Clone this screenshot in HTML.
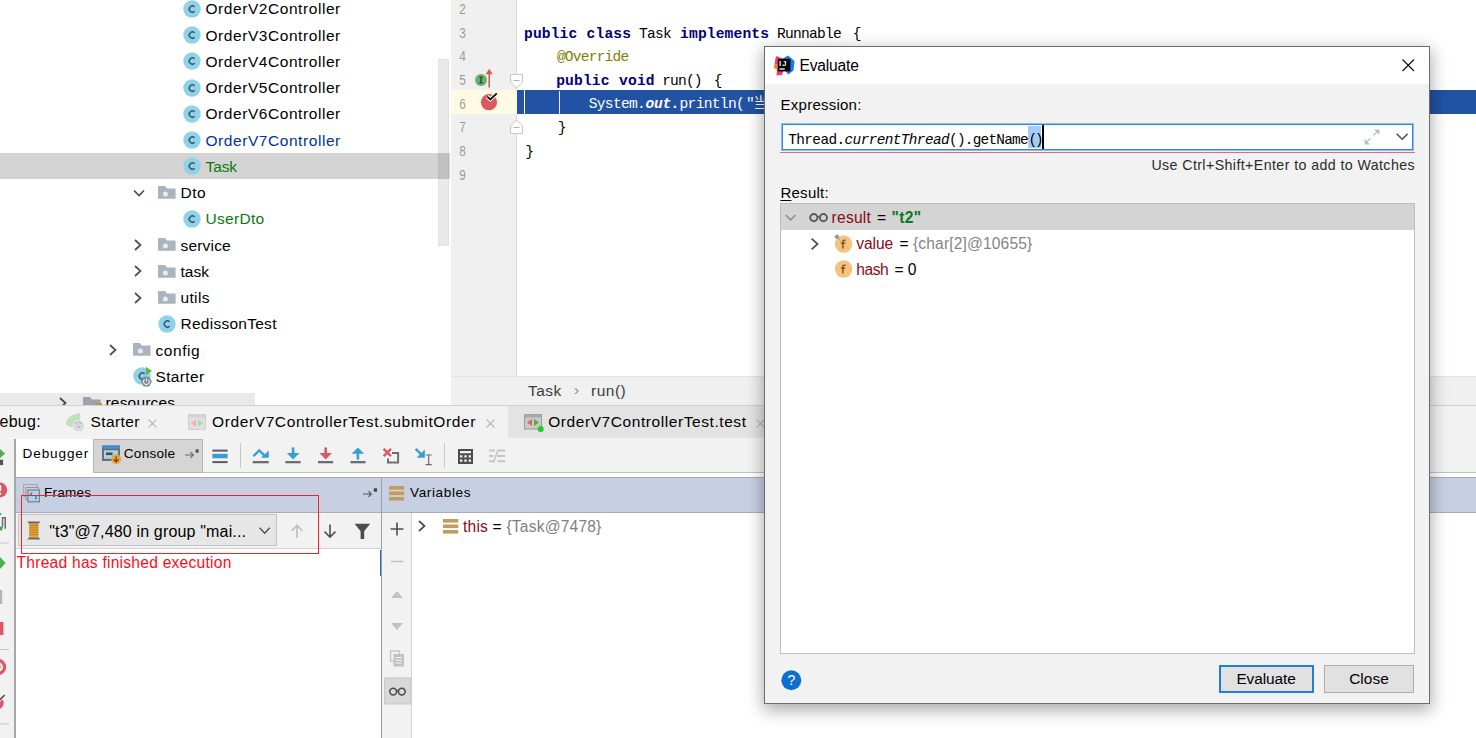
<!DOCTYPE html>
<html lang="en">
<head>
<meta charset="utf-8">
<title>Evaluate</title>
<style>
*{box-sizing:border-box;margin:0;padding:0}
html,body{width:1476px;height:738px;overflow:hidden;background:#fff}
body{position:relative;font-family:"Liberation Sans","Noto Sans CJK SC",sans-serif;font-size:15.5px;letter-spacing:.5px;color:#000}
.abs{position:absolute}
.t{position:absolute;white-space:pre;line-height:20px;height:20px}
svg{position:absolute;overflow:visible}
/* ---------- project tree ---------- */
#tree{position:absolute;left:0;top:0;width:450px;height:405px;background:#fff;overflow:hidden}
.row{position:absolute;left:0;width:450px;height:26.25px}
.row.sel{background:#d4d4d4}
.row .t{top:3px}
.green{color:#0a7a0a}
.blue{color:#0032a0}
/* ---------- editor ---------- */
#gutter{position:absolute;left:451px;top:0;width:66px;height:377px;background:#f0f0f0;border-right:1px solid #d9d9d9}
#editor{position:absolute;left:517px;top:0;width:959px;height:377px;background:#fff}
.code{font-family:"Liberation Mono","Noto Sans CJK SC",monospace;font-size:14.6px;letter-spacing:0;white-space:pre;position:absolute;line-height:20px;height:20px}
.ln{font-family:"Liberation Mono",monospace;font-size:14.6px;letter-spacing:0;position:absolute;left:458.6px;color:#9a9a9a;line-height:20px;transform:scaleX(.8);transform-origin:0 0}
.kw{color:#000080;font-weight:bold}
.an{color:#808000}
</style>
</head>
<body>
<div id="tree">
<svg style="left:183px;top:-0.07px" width="18" height="18" viewBox="0 0 18 18"><circle cx="9" cy="9" r="8.7" fill="#8ed3ea"/><path d="M11.6 6.9 A3.1 3.1 0 1 0 11.6 11.3" fill="none" stroke="#3e5866" stroke-width="1.5"/></svg>
<span class="t" style="left:205.5px;top:-0.57px;font-size:15.5px;letter-spacing:0.560px;">OrderV2Controller</span>
<svg style="left:183px;top:26.17px" width="18" height="18" viewBox="0 0 18 18"><circle cx="9" cy="9" r="8.7" fill="#8ed3ea"/><path d="M11.6 6.9 A3.1 3.1 0 1 0 11.6 11.3" fill="none" stroke="#3e5866" stroke-width="1.5"/></svg>
<span class="t" style="left:205.5px;top:25.67px;font-size:15.5px;letter-spacing:0.560px;">OrderV3Controller</span>
<svg style="left:183px;top:52.42px" width="18" height="18" viewBox="0 0 18 18"><circle cx="9" cy="9" r="8.7" fill="#8ed3ea"/><path d="M11.6 6.9 A3.1 3.1 0 1 0 11.6 11.3" fill="none" stroke="#3e5866" stroke-width="1.5"/></svg>
<span class="t" style="left:205.5px;top:51.92px;font-size:15.5px;letter-spacing:0.560px;">OrderV4Controller</span>
<svg style="left:183px;top:78.67px" width="18" height="18" viewBox="0 0 18 18"><circle cx="9" cy="9" r="8.7" fill="#8ed3ea"/><path d="M11.6 6.9 A3.1 3.1 0 1 0 11.6 11.3" fill="none" stroke="#3e5866" stroke-width="1.5"/></svg>
<span class="t" style="left:205.5px;top:78.17px;font-size:15.5px;letter-spacing:0.560px;">OrderV5Controller</span>
<svg style="left:183px;top:104.92px" width="18" height="18" viewBox="0 0 18 18"><circle cx="9" cy="9" r="8.7" fill="#8ed3ea"/><path d="M11.6 6.9 A3.1 3.1 0 1 0 11.6 11.3" fill="none" stroke="#3e5866" stroke-width="1.5"/></svg>
<span class="t" style="left:205.5px;top:104.42px;font-size:15.5px;letter-spacing:0.560px;">OrderV6Controller</span>
<svg style="left:183px;top:131.18px" width="18" height="18" viewBox="0 0 18 18"><circle cx="9" cy="9" r="8.7" fill="#8ed3ea"/><path d="M11.6 6.9 A3.1 3.1 0 1 0 11.6 11.3" fill="none" stroke="#3e5866" stroke-width="1.5"/></svg>
<span class="t" style="left:205.5px;top:130.68px;font-size:15.5px;letter-spacing:0.560px;color:#0032a0;">OrderV7Controller</span>
<div class="row sel" style="top:153.30px;height:25.6px"></div>
<svg style="left:183px;top:157.43px" width="18" height="18" viewBox="0 0 18 18"><circle cx="9" cy="9" r="8.7" fill="#8ed3ea"/><path d="M11.6 6.9 A3.1 3.1 0 1 0 11.6 11.3" fill="none" stroke="#3e5866" stroke-width="1.5"/></svg>
<span class="t" style="left:205.5px;top:156.93px;font-size:15.5px;letter-spacing:-0.119px;color:#0a7a0a;">Task</span>
<svg style="left:158px;top:185.88px" width="18" height="14" viewBox="0 0 18 14"><path d="M0 0 H7 L9 2.4 H17.6 V12.8 H0 Z" fill="#aab4bf"/><circle cx="7.4" cy="8" r="2.5" fill="#e8ecef"/></svg>
<svg style="left:132px;top:187.68px" width="14" height="10" viewBox="0 0 14 10"><path d="M2 2.5 L7 7.5 L12 2.5" fill="none" stroke="#4d4d4d" stroke-width="1.7"/></svg>
<span class="t" style="left:180.5px;top:183.18px;font-size:15.5px;letter-spacing:0.525px;">Dto</span>
<svg style="left:183px;top:209.93px" width="18" height="18" viewBox="0 0 18 18"><circle cx="9" cy="9" r="8.7" fill="#8ed3ea"/><path d="M11.6 6.9 A3.1 3.1 0 1 0 11.6 11.3" fill="none" stroke="#3e5866" stroke-width="1.5"/></svg>
<span class="t" style="left:205.5px;top:209.43px;font-size:15.5px;letter-spacing:0.292px;color:#0a7a0a;">UserDto</span>
<svg style="left:158px;top:238.38px" width="18" height="14" viewBox="0 0 18 14"><path d="M0 0 H7 L9 2.4 H17.6 V12.8 H0 Z" fill="#aab4bf"/><circle cx="7.4" cy="8" r="2.5" fill="#e8ecef"/></svg>
<svg style="left:133px;top:238.18px" width="10" height="14" viewBox="0 0 10 14"><path d="M2 2 L7.5 7 L2 12" fill="none" stroke="#4d4d4d" stroke-width="1.7"/></svg>
<span class="t" style="left:180.5px;top:235.68px;font-size:15.5px;letter-spacing:0.184px;">service</span>
<svg style="left:158px;top:264.62px" width="18" height="14" viewBox="0 0 18 14"><path d="M0 0 H7 L9 2.4 H17.6 V12.8 H0 Z" fill="#aab4bf"/><circle cx="7.4" cy="8" r="2.5" fill="#e8ecef"/></svg>
<svg style="left:133px;top:264.43px" width="10" height="14" viewBox="0 0 10 14"><path d="M2 2 L7.5 7 L2 12" fill="none" stroke="#4d4d4d" stroke-width="1.7"/></svg>
<span class="t" style="left:180.5px;top:261.93px;font-size:15.5px;letter-spacing:0.041px;">task</span>
<svg style="left:158px;top:290.88px" width="18" height="14" viewBox="0 0 18 14"><path d="M0 0 H7 L9 2.4 H17.6 V12.8 H0 Z" fill="#aab4bf"/><circle cx="7.4" cy="8" r="2.5" fill="#e8ecef"/></svg>
<svg style="left:133px;top:290.68px" width="10" height="14" viewBox="0 0 10 14"><path d="M2 2 L7.5 7 L2 12" fill="none" stroke="#4d4d4d" stroke-width="1.7"/></svg>
<span class="t" style="left:180.5px;top:288.18px;font-size:15.5px;letter-spacing:0.344px;">utils</span>
<svg style="left:158px;top:314.93px" width="18" height="18" viewBox="0 0 18 18"><circle cx="9" cy="9" r="8.7" fill="#8ed3ea"/><path d="M11.6 6.9 A3.1 3.1 0 1 0 11.6 11.3" fill="none" stroke="#3e5866" stroke-width="1.5"/></svg>
<span class="t" style="left:180.5px;top:314.43px;font-size:15.5px;letter-spacing:0.263px;">RedissonTest</span>
<svg style="left:133px;top:343.38px" width="18" height="14" viewBox="0 0 18 14"><path d="M0 0 H7 L9 2.4 H17.6 V12.8 H0 Z" fill="#aab4bf"/><circle cx="7.4" cy="8" r="2.5" fill="#e8ecef"/></svg>
<svg style="left:108px;top:343.18px" width="10" height="14" viewBox="0 0 10 14"><path d="M2 2 L7.5 7 L2 12" fill="none" stroke="#4d4d4d" stroke-width="1.7"/></svg>
<span class="t" style="left:155.5px;top:340.68px;font-size:15.5px;letter-spacing:0.554px;">config</span>
<svg style="left:133px;top:367.43px" width="18" height="18" viewBox="0 0 18 18"><circle cx="9" cy="9" r="8.7" fill="#8ed3ea"/><path d="M11.6 6.9 A3.1 3.1 0 1 0 11.6 11.3" fill="none" stroke="#3e5866" stroke-width="1.5"/></svg>
<svg style="left:141px;top:366.43px" width="12" height="22" viewBox="0 0 12 22"><path d="M4.9 0.7 L11 4.9 L4.9 9 Z" fill="#62b543"/><path d="M10.9 15.6 L8.15 20.4 H2.65 L-0.1 15.6 L2.65 10.8 H8.15 Z" fill="#7b8d9b"/><path d="M5.4 12.4 V15.6 M3.4 13.6 A2.9 2.9 0 1 0 7.4 13.6" fill="none" stroke="#eef1f3" stroke-width="1.1"/></svg>
<span class="t" style="left:155.5px;top:366.93px;font-size:15.5px;letter-spacing:0.355px;">Starter</span>
<svg style="left:83px;top:397.38px" width="18" height="14" viewBox="0 0 18 14"><path d="M0 0 H7 L9 2.4 H17.6 V12.8 H0 Z" fill="#aab4bf"/></svg>
<svg style="left:58px;top:395.68px" width="10" height="14" viewBox="0 0 10 14"><path d="M2 2 L7.5 7 L2 12" fill="none" stroke="#4d4d4d" stroke-width="1.7"/></svg>
<span class="t" style="left:105.5px;top:393.18px;font-size:15.5px;letter-spacing:0.182px;">resources</span>
<div class="abs" style="left:94.6px;top:403.3px;width:7.2px;height:1.4px;background:#e0a030"></div>
<div class="abs" style="left:0;top:393px;width:255px;height:12px;background:rgba(0,0,0,.085)"></div>
<div class="abs" style="left:438px;top:59.3px;width:11px;height:187px;background:rgba(0,0,0,.085);border:1px solid rgba(0,0,0,.03)"></div>
</div>
<div class="abs" style="left:0;top:405px;width:1476px;height:1px;background:#d1d1d1"></div>
<div id="gutter"></div><div id="editor"></div>
<div class="abs" style="left:451px;top:90.10px;width:66px;height:23.8px;background:#fffae3"></div>
<div class="abs" style="left:517px;top:90.10px;width:959px;height:23.8px;background:#2152a3"></div>
<div class="abs" style="left:524px;top:90.10px;width:1px;height:23.8px;background:#fff"></div>
<div class="abs" style="left:559px;top:91.10px;width:1px;height:22.8px;background:#e8eefc"></div>
<span class="ln" style="top:0.10px">2</span>
<span class="ln" style="top:23.75px">3</span>
<span class="ln" style="top:47.40px">4</span>
<span class="ln" style="top:71.05px">5</span>
<span class="ln" style="top:94.70px">6</span>
<span class="ln" style="top:118.35px">7</span>
<span class="ln" style="top:142.00px">8</span>
<span class="ln" style="top:165.65px">9</span>
<span class="code kw" style="left:524.00px;top:23.50px;letter-spacing:0.140px;">public</span>
<span class="code kw" style="left:586.60px;top:23.50px;letter-spacing:0.140px;">class</span>
<span class="code" style="left:639.10px;top:23.50px;letter-spacing:-0.760px;">Task</span>
<span class="code kw" style="left:680.10px;top:23.50px;letter-spacing:0.140px;">implements</span>
<span class="code" style="left:777.10px;top:23.50px;letter-spacing:-0.760px;">Runnable</span>
<span class="code" style="left:852.80px;top:23.50px;letter-spacing:-0.760px;">{</span>
<span class="code an" style="left:556.90px;top:47.15px;letter-spacing:-0.810px;">@Override</span>
<span class="code kw" style="left:556.20px;top:70.80px;letter-spacing:0.140px;">public</span>
<span class="code kw" style="left:619.10px;top:70.80px;letter-spacing:0.140px;">void</span>
<span class="code" style="left:662.20px;top:70.80px;letter-spacing:-0.860px;">run()</span>
<span class="code" style="left:713.80px;top:70.80px;letter-spacing:-0.760px;">{</span>
<span class="code" style="left:588.70px;top:94.45px;letter-spacing:-0.690px;color:#fff;">System.</span>
<span class="code" style="left:645.60px;top:94.45px;letter-spacing:-0.260px;color:#fff;font-weight:bold;font-style:italic;">out.</span>
<span class="code" style="left:679.50px;top:94.45px;letter-spacing:-0.690px;color:#fff;">println(</span>
<span class="code" style="left:745.90px;top:94.45px;letter-spacing:-0.760px;color:#fff;">"</span>
<span class="code" style="left:753.40px;top:94.45px;letter-spacing:5.840px;color:#fff;">当前</span>
<span class="code" style="left:557.70px;top:118.10px;letter-spacing:-0.760px;">}</span>
<span class="code" style="left:525.20px;top:141.75px;letter-spacing:-0.760px;">}</span>
<svg style="left:474px;top:65.35px" width="22" height="24" viewBox="0 0 22 24"><circle cx="7" cy="15" r="6" fill="#62b36c"/><path d="M5.3 12.2 H8.7 M7 12.2 V17.8 M5.3 17.8 H8.7" stroke="#3a4a3d" stroke-width="1.5" fill="none"/><path d="M15.2 22.6 V5" stroke="#e0594d" stroke-width="1.6" fill="none"/><path d="M11.6 9.2 L15.2 3.8 L18.8 9.2 Z" fill="#e0594d"/></svg>
<svg style="left:479px;top:90.00px" width="22" height="24" viewBox="0 0 22 24"><circle cx="10" cy="12.2" r="8.1" fill="#db5860"/><path d="M8.2 6.6 L11.4 9.4 L17.8 3.4" stroke="#fff" stroke-width="4" fill="none"/><path d="M8.2 6.6 L11.4 9.4 L17.8 3.4" stroke="#111" stroke-width="1.9" fill="none"/></svg>
<svg style="left:510px;top:73.95px" width="13" height="15" viewBox="0 0 13 15"><path d="M0.5 0.5 H12.5 V8 L6.5 14 L0.5 8 Z" fill="#fff" stroke="#c6c6c6"/><path d="M3.5 6.5 H9.5" stroke="#b0b0b0"/></svg>
<svg style="left:510px;top:118.75px" width="13" height="15" viewBox="0 0 13 15"><path d="M0.5 14.5 H12.5 V7 L6.5 1 L0.5 7 Z" fill="#fff" stroke="#c6c6c6"/><path d="M3.5 8.5 H9.5" stroke="#b0b0b0"/></svg>
<div class="abs" style="left:451px;top:376px;width:1025px;height:29px;background:#f0f0f0;border-top:1px solid #e3e3e3"></div>
<span class="t" style="left:528px;top:381px;color:#3c3c3c">Task</span>
<span class="t" style="left:574px;top:380px;color:#8a8a8a;font-size:15px">›</span>
<span class="t" style="left:591px;top:381px;color:#3c3c3c">run()</span>
<div class="abs" style="left:0;top:406px;width:1476px;height:332px;background:#fff"></div>
<div class="abs" style="left:0;top:406px;width:1476px;height:33px;background:#f2f2f2"></div>
<div class="abs" style="left:508px;top:406px;width:270px;height:32px;background:#e3e3e3"></div>
<span class="t" style="left:-12.2px;top:412.00px;font-size:16px;letter-spacing:0.234px;">Debug:</span>
<svg style="left:65px;top:412px" width="21" height="21" viewBox="0 0 21 21"><path d="M1 12 C1 5 7 3 15 1 C16 6 15 11 11 14 C7 16 3 15 1 12 Z" fill="#bfe0b8"/><circle cx="13.5" cy="14" r="5.6" fill="#c3c7ca" stroke="#f2f2f2" stroke-width="1"/><path d="M13.5 10.6 V14 M11.2 12 A3.2 3.2 0 1 0 15.8 12" fill="none" stroke="#eeeeee" stroke-width="1.2"/></svg>
<span class="t" style="left:90.6px;top:412.00px;font-size:15.5px;letter-spacing:0.398px;">Starter</span>
<svg style="left:148.2px;top:419px" width="9" height="9" viewBox="0 0 10 10"><path d="M0.7 0.7 L9.3 9.3 M9.3 0.7 L0.7 9.3" stroke="#b3b3b3" stroke-width="1.3" fill="none"/></svg>
<svg style="left:188px;top:414px" width="18" height="16" viewBox="0 0 18 16"><rect x="0.5" y="0.5" width="17" height="15" fill="#e0e0e0" stroke="#cfcfcf"/><rect x="0.5" y="0.5" width="17" height="3" fill="#d2d2d2"/><path d="M8 5.5 V12.5 L3 9 Z" fill="#f0b0ac"/><path d="M10 5.5 V12.5 L15 9 Z" fill="#a8dca8"/></svg>
<span class="t" style="left:212px;top:412.00px;font-size:15.5px;letter-spacing:0.613px;">OrderV7ControllerTest.submitOrder</span>
<svg style="left:485.6px;top:419px" width="9" height="9" viewBox="0 0 10 10"><path d="M0.7 0.7 L9.3 9.3 M9.3 0.7 L0.7 9.3" stroke="#b3b3b3" stroke-width="1.3" fill="none"/></svg>
<svg style="left:524px;top:414px" width="21" height="19" viewBox="0 0 21 19"><rect x="0.5" y="0.5" width="17" height="14.5" fill="#c9c9c9" stroke="#9a9a9a"/><rect x="0.5" y="0.5" width="17" height="3" fill="#a9a9a9"/><path d="M8 5 V12 L3 8.5 Z" fill="#e0635c"/><path d="M10 5 V12 L15 8.5 Z" fill="#4caf50"/><circle cx="16.7" cy="15" r="3" fill="#1fd11f"/></svg>
<span class="t" style="left:548.2px;top:412.00px;font-size:15.5px;letter-spacing:0.573px;">OrderV7ControllerTest.test</span>
<svg style="left:756.3px;top:419px" width="9" height="9" viewBox="0 0 10 10"><path d="M0.7 0.7 L9.3 9.3 M9.3 0.7 L0.7 9.3" stroke="#b3b3b3" stroke-width="1.3" fill="none"/></svg>
<div class="abs" style="left:0;top:439px;width:1476px;height:34px;background:#f2f2f2"></div>
<div class="abs" style="left:0;top:472px;width:1476px;height:1px;background:#c2c2c2"></div>
<div class="abs" style="left:16px;top:473px;width:1460px;height:4px;background:#fff"></div>
<div class="abs" style="left:0;top:439px;width:16px;height:299px;background:#f2f2f2"></div>
<div class="abs" style="left:14.2px;top:439px;width:1.5px;height:299px;background:#a8a8a8"></div>
<div class="abs" style="left:16px;top:439px;width:78px;height:38px;background:#fff"></div>
<span class="t" style="left:22.6px;top:444.10px;font-size:13.6px;letter-spacing:0.860px;">Debugger</span>
<div class="abs" style="left:93px;top:439px;width:110px;height:33.5px;background:#d5d5d5;border:1px solid #b4b4b4"></div>
<svg style="left:102px;top:444.6px" width="20" height="20" viewBox="0 0 20 20"><rect x="0" y="0.5" width="18" height="15.5" fill="#6e6e6e"/><rect x="0" y="0.5" width="18" height="3.2" fill="#3d8fd6"/><rect x="2" y="5.3" width="14" height="8.5" fill="#a9d3f0"/><rect x="4" y="7.5" width="6.5" height="2.6" fill="#4a4a4a"/><circle cx="14.2" cy="14.2" r="5" fill="#eaa43a"/><path d="M14.2 11.2 V16.6 M11.8 14.4 L14.2 16.9 L16.6 14.4" fill="none" stroke="#5a4420" stroke-width="1.2"/></svg>
<span class="t" style="left:123.8px;top:444.10px;font-size:13.6px;letter-spacing:0.246px;">Console</span>
<svg style="left:185px;top:448px" width="14" height="12" viewBox="0 0 14 12"><path d="M0 7 H8 M5.5 4.2 L8.3 7 L5.5 9.8" fill="none" stroke="#666" stroke-width="1.1"/><rect x="10.6" y="1.3" width="3" height="3.4" fill="#555"/></svg>
<svg style="left:212px;top:449px" width="16" height="15" viewBox="0 0 16 15"><rect x="0.4" y="0.6" width="15.2" height="2" fill="#5a5a5a"/><rect x="0.4" y="4.8" width="15.2" height="4.5" fill="#389fd6"/><rect x="0.4" y="12.1" width="15.2" height="2" fill="#5a5a5a"/></svg>
<div class="abs" style="left:240px;top:443px;width:1px;height:25px;background:#c8c8c8"></div>
<svg style="left:245px;top:440px" width="200" height="32" viewBox="0 0 200 32"><path d="M8.4 16.2 L14.2 10.4 L20.6 16.6" fill="none" stroke="#389fd6" stroke-width="2.4"/><path d="M15.8 17.8 H23.8 V10.6 Z" fill="#389fd6"/><rect x="7.7" y="21" width="16" height="2.3" fill="#6e6e6e"/><path d="M48.1 7.4 V15" stroke="#389fd6" stroke-width="2.6" fill="none"/><path d="M41.8 12.9 H54.4 L48.1 19.4 Z" fill="#389fd6"/><rect x="40.4" y="21" width="15.2" height="2.3" fill="#6e6e6e"/><path d="M80.7 7.4 V15" stroke="#db5860" stroke-width="2.6" fill="none"/><path d="M74.4 12.9 H87 L80.7 19.4 Z" fill="#db5860"/><rect x="73" y="21" width="15.2" height="2.3" fill="#6e6e6e"/><path d="M112.9 19.6 V12" stroke="#389fd6" stroke-width="2.6" fill="none"/><path d="M106.6 13.8 H119.2 L112.9 7.4 Z" fill="#389fd6"/><rect x="105.4" y="21" width="15.2" height="2.3" fill="#6e6e6e"/><path d="M138.6 8.8 L146 16.2 M146 8.8 L138.6 16.2" stroke="#db5860" stroke-width="2.4" fill="none"/><path d="M147 12.9 H153.1 V22.4 H143 V18.6" fill="none" stroke="#6e6e6e" stroke-width="2"/><path d="M170.6 8.8 L177.5 15.6" stroke="#389fd6" stroke-width="2.4" fill="none"/><path d="M171.6 17.8 H179.8 V9.6 Z" fill="#389fd6"/><path d="M180.6 15 H186.8 M183.7 15 V24.6 M180.6 24.6 H186.8" stroke="#6e6e6e" stroke-width="1.2" fill="none"/></svg>
<div class="abs" style="left:443.5px;top:443px;width:1px;height:25px;background:#c8c8c8"></div>
<svg style="left:457.5px;top:448.5px" width="15" height="15" viewBox="0 0 15 15"><path d="M0 0 H15 V15 H0 Z M2 2 V4.2 H13 V2 Z M2 6.2 V8.4 H4.4 V6.2 Z M6.3 6.2 V8.4 H8.7 V6.2 Z M10.6 6.2 V8.4 H13 V6.2 Z M2 10.4 V12.8 H4.4 V10.4 Z M6.3 10.4 V12.8 H8.7 V10.4 Z M10.6 10.4 V12.8 H13 V10.4 Z" fill="#4d4d4d" fill-rule="evenodd"/></svg>
<svg style="left:489px;top:449px" width="16" height="14" viewBox="0 0 16 14"><path d="M0 1.6 H6 M0 6.9 H4.4 M0 12.2 H5 M9.4 1.6 H16 M8 6.9 H16 M8.6 12.2 H16" stroke="#c4c4c4" stroke-width="2" fill="none"/><path d="M9 0.6 L4.6 13.2" stroke="#c4c4c4" stroke-width="1.4" fill="none"/></svg>
<svg style="left:0;top:446px" width="14" height="292" viewBox="0 0 14 292"><path d="M0 3 L5.2 7.5 L0 12 Z" fill="#4caf50"/><rect x="0" y="13.7" width="3.1" height="5.4" fill="#555"/><circle cx="-0.2" cy="44" r="7.4" fill="#e05560"/><rect x="-1" y="39" width="2.2" height="6" fill="#fff"/><rect x="-1" y="46.6" width="2.2" height="2.2" fill="#fff"/><path d="M1.8 70.9 H6 V82.8 H4.5 V72.4 H3.3 V80.6 H1.8 Z" fill="#6e6e6e"/><path d="M0 80.6 H3.4 L1.3 85.2 L0 84 Z" fill="#3fae4a"/><rect x="0" y="67" width="1.2" height="2.2" fill="#3fae4a"/><rect x="0" y="96.5" width="9" height="1" fill="#c8c8c8"/><path d="M0 111 L5.6 117 L0 123 Z" fill="#4caf50"/><rect x="0" y="144" width="2.2" height="14" fill="#b5b5b5"/><rect x="0" y="176" width="3.4" height="13" fill="#e05560"/><rect x="0" y="203" width="9" height="1" fill="#c8c8c8"/><circle cx="-2" cy="221" r="6.6" fill="none" stroke="#e05560" stroke-width="3.2"/><circle cx="-2" cy="221" r="2.6" fill="#e05560"/><circle cx="-2.5" cy="257" r="6.2" fill="#e05560"/><path d="M-1 254.6 L4.8 249" stroke="#f2f2f2" stroke-width="3.4"/><path d="M-1 254.6 L4.8 249" stroke="#4d4d4d" stroke-width="1.5"/><rect x="0" y="277.4" width="9" height="1" fill="#c8c8c8"/></svg>
<div class="abs" style="left:16px;top:477px;width:1460px;height:35.5px;background:#c7d0e2;border-top:1px solid #a7a9ad;border-bottom:1px solid #a9acb2"></div>
<div class="abs" style="left:381px;top:477px;width:1.4px;height:261px;background:#9d9fa3"></div>
<svg style="left:22.9px;top:483.6px" width="17" height="19" viewBox="0 0 17 19"><rect x="0.6" y="0.6" width="13.6" height="12" fill="none" stroke="#a2a6ad" stroke-width="1"/><rect x="2.8" y="3.5" width="12.6" height="11.8" fill="#c7d0e2" stroke="#90949b" stroke-width="1"/><rect x="5" y="6" width="11.4" height="11.8" fill="#a9d5f1" stroke="#7c8086" stroke-width="1.2"/><path d="M9.4 8.4 L7.4 10 L9.4 11.6 M12 12 L14 13.6 L12 15.2" fill="none" stroke="#3e4a58" stroke-width="1"/></svg>
<span class="t" style="left:44px;top:483.00px;font-size:13.6px;letter-spacing:0.187px;">Frames</span>
<svg style="left:363px;top:487px" width="15" height="12" viewBox="0 0 15 12"><path d="M0 7 H8 M5.5 4.2 L8.3 7 L5.5 9.8" fill="none" stroke="#555" stroke-width="1.1"/><rect x="10.8" y="1.3" width="3.2" height="3.4" fill="#444"/></svg>
<svg style="left:389.4px;top:486px" width="16" height="15" viewBox="0 0 16 15"><rect width="15.2" height="3.6" fill="#c39b5f"/><rect y="5.5" width="15.2" height="3.6" fill="#c39b5f"/><rect y="11" width="15.2" height="3.6" fill="#c39b5f"/></svg>
<span class="t" style="left:410px;top:483.00px;font-size:13.6px;letter-spacing:0.603px;">Variables</span>
<div class="abs" style="left:16px;top:512.5px;width:365px;height:36.5px;background:#f2f2f2;border-bottom:1px solid #d4d4d4"></div>
<div class="abs" style="left:17.8px;top:514px;width:259.2px;height:32.4px;background:#e6e6e6;border:1px solid #c4c4c4"></div>
<svg style="left:26.5px;top:521px" width="14" height="19" viewBox="0 0 14 19"><rect x="2.2" y="2" width="9.2" height="15" fill="#e9aa3d"/><path d="M2.2 4.5 H11.4 M2.2 6.8 H11.4 M2.2 9.1 H11.4 M2.2 11.4 H11.4 M2.2 13.7 H11.4" stroke="#b9791c" stroke-width="1"/><path d="M0.3 0.4 H13.3 L11.8 2.6 H1.8 Z M1.8 16.4 H11.8 L13.3 18.6 H0.3 Z" fill="#6b6b6b"/></svg>
<span class="t" style="left:49.2px;top:522.40px;font-size:16px;letter-spacing:0.167px;">&quot;t3&quot;@7,480 in group &quot;mai...</span>
<svg style="left:259px;top:527px" width="12" height="8" viewBox="0 0 12 8"><path d="M0.6 0.8 L5.7 6.3 L10.8 0.8" fill="none" stroke="#4d4d4d" stroke-width="1.4"/></svg>
<svg style="left:289.5px;top:524px" width="14" height="15" viewBox="0 0 14 15"><path d="M7 14 V1.6 M1.6 7 L7 1.4 L12.4 7" fill="none" stroke="#bdbdbd" stroke-width="1.6"/></svg>
<svg style="left:322.8px;top:524px" width="14" height="15" viewBox="0 0 14 15"><path d="M7 0.6 V13 M1.6 7.6 L7 13.2 L12.4 7.6" fill="none" stroke="#4d4d4d" stroke-width="1.6"/></svg>
<svg style="left:354px;top:522.5px" width="17" height="17" viewBox="0 0 17 17"><path d="M0.6 0.8 H16.2 L10.2 8.2 V16 H6.6 V8.2 Z" fill="#4d4d4d"/></svg>
<span class="t" style="left:16.6px;top:552.80px;font-size:15.6px;letter-spacing:0.239px;color:#fb0d1b;">Thread has finished execution</span>
<div class="abs" style="left:379.6px;top:549.5px;width:1.6px;height:26px;background:#2b66b3"></div>
<div class="abs" style="left:382.4px;top:513px;width:30px;height:225px;background:#f2f2f2;border-right:1px solid #d4d4d4"></div>
<svg style="left:382px;top:513px" width="30" height="200" viewBox="0 0 30 200"><path d="M8.6 16 H21.4 M15 9.6 V22.4" stroke="#4d4d4d" stroke-width="1.6"/><path d="M9 48.5 H21" stroke="#c2c2c2" stroke-width="1.6"/><path d="M9 85 H21 L15 78 Z" fill="#c2c2c2"/><path d="M9 110 H21 L15 117 Z" fill="#c2c2c2"/><rect x="8.5" y="138" width="9" height="10" fill="none" stroke="#c2c2c2" stroke-width="1.3"/><rect x="11.5" y="141" width="10.5" height="12.5" fill="#c2c2c2"/><path d="M13.5 144.5 H20 M13.5 147.3 H20 M13.5 150.1 H20" stroke="#f2f2f2" stroke-width="1"/><rect x="2.6" y="165" width="26" height="26" fill="#d9d9d9" stroke="#c6c6c6"/><circle cx="11.2" cy="178.6" r="3.4" fill="none" stroke="#4d4d4d" stroke-width="1.6"/><circle cx="19.8" cy="178.6" r="3.4" fill="none" stroke="#4d4d4d" stroke-width="1.6"/><path d="M14.4 177.6 H16.6" stroke="#4d4d4d" stroke-width="1.4"/></svg>
<svg style="left:417px;top:519px" width="10" height="14" viewBox="0 0 10 14"><path d="M2 2 L7.5 7 L2 12" fill="none" stroke="#4d4d4d" stroke-width="1.7"/></svg>
<svg style="left:443.4px;top:519px" width="16" height="15" viewBox="0 0 16 15"><rect width="15.2" height="3.6" fill="#c39b5f"/><rect y="5.5" width="15.2" height="3.6" fill="#c39b5f"/><rect y="11" width="15.2" height="3.6" fill="#c39b5f"/></svg>
<span class="t" style="left:463px;top:516.90px;font-size:15.6px;letter-spacing:0.192px;"><span style="color:#8b0a14">this</span> = <span style="color:#808080">{Task@7478}</span></span>
<div class="abs" style="left:20.8px;top:495px;width:298.4px;height:58.6px;border:1.2px solid #f5202c"></div>
<div class="abs" style="left:764px;top:46px;width:666px;height:657.5px;background:#f2f2f2;border:1px solid #6c6c6c;box-shadow:0 5px 16px 1px rgba(0,0,0,.34)"></div>
<div class="abs" style="left:765px;top:47px;width:664px;height:37px;background:#fff"></div>
<svg style="left:773.5px;top:54.5px" width="21" height="21" viewBox="0 0 21 21"><path d="M2 1 L9 3.5 L4 10 L0.5 8.5 Z" fill="#fb3a6d"/><path d="M0.5 8.5 L4 10 L3 14.5 L0 13 Z" fill="#fc7a1a"/><path d="M9 3.5 L14 0.5 L20.5 6 L19.5 15.5 L14 19.5 L9 12 Z" fill="#0c7df2"/><path d="M3 14.5 L4 10 L10 14 L8 20 L2.5 20.5 Z" fill="#fb3a6d"/><rect x="3.8" y="3.8" width="12.6" height="12.6" fill="#000"/><rect x="5.4" y="13.4" width="5.4" height="1.3" fill="#fff"/><text x="5.1" y="11" font-family="Liberation Sans,sans-serif" font-size="7.6" font-weight="bold" fill="#fff" letter-spacing="1">IJ</text></svg>
<span class="t" style="left:799.6px;top:55.90px;font-size:15.6px;letter-spacing:-0.211px;">Evaluate</span>
<svg style="left:1402px;top:59px" width="13" height="13" viewBox="0 0 13 13"><path d="M0.5 0.5 L12 12 M12 0.5 L0.5 12" stroke="#111" stroke-width="1.2" fill="none"/></svg>
<span class="t" style="left:780.6px;top:94.60px;font-size:15px;letter-spacing:0.239px;">Expression:</span>
<div class="abs" style="left:780px;top:152px;width:635px;height:1px;background:#e4687c"></div>
<div class="abs" style="left:781.6px;top:123.8px;width:631.2px;height:26px;background:#fff;border:1px solid #2f86e4;box-shadow:0 0 0 1px rgba(60,145,235,.55)"></div>
<div class="abs" style="left:1028px;top:126px;width:13.4px;height:22.4px;background:#a6cbf5"></div>
<div class="abs" style="left:1041.6px;top:125.4px;width:2px;height:23.2px;background:#000"></div>
<span class="t" style="left:788.2px;top:130.20px;font-size:14.4px;letter-spacing:-0.579px;font-family:'Liberation Mono','Noto Sans CJK SC',monospace;">Thread.</span>
<span class="t" style="left:844.6px;top:130.20px;font-size:14.4px;letter-spacing:-0.605px;font-style:italic;font-family:'Liberation Mono','Noto Sans CJK SC',monospace;">currentThread</span>
<span class="t" style="left:949px;top:130.20px;font-size:14.4px;letter-spacing:-0.756px;font-family:'Liberation Mono','Noto Sans CJK SC',monospace;">().getName</span>
<span class="t" style="left:1028.4px;top:130.20px;font-size:14.4px;letter-spacing:-1.941px;font-family:'Liberation Mono','Noto Sans CJK SC',monospace;">()</span>
<svg style="left:1363.6px;top:128.8px" width="16" height="16" viewBox="0 0 16 16"><path d="M9.6 6.2 L14.6 1.2 M2 13.8 L6.6 9.2" stroke="#b9c0c5" stroke-width="1.3" fill="none"/><path d="M10 0.6 H15.4 V6 Z M0.6 9.8 V15.4 H6.2 Z" fill="#b9c0c5"/></svg>
<svg style="left:1395.6px;top:133px" width="13" height="8" viewBox="0 0 13 8"><path d="M0.7 0.8 L6.2 6.3 L11.7 0.8" fill="none" stroke="#4d4d4d" stroke-width="1.5"/></svg>
<span class="t" style="left:1151.4px;top:154.90px;font-size:14.2px;letter-spacing:0.414px;color:#2b2b2b;">Use Ctrl+Shift+Enter to add to Watches</span>
<span class="t" style="left:780.4px;top:182.50px;font-size:15px;letter-spacing:0.273px;"><span style="text-decoration:underline;text-underline-offset:2px">R</span>esult:</span>
<div class="abs" style="left:780.4px;top:202.6px;width:634.6px;height:451.2px;background:#fff;border:1px solid #bdbdbd"></div>
<div class="abs" style="left:781.4px;top:203.6px;width:632.6px;height:26px;background:#d4d4d4"></div>
<svg style="left:785px;top:213.5px" width="12" height="8" viewBox="0 0 12 8"><path d="M0.8 1 L5.6 6 L10.4 1" fill="none" stroke="#8c8c8c" stroke-width="1.5"/></svg>
<svg style="left:809.4px;top:212px" width="20" height="11" viewBox="0 0 20 11"><circle cx="4.8" cy="5.6" r="3.6" fill="none" stroke="#5a5a5a" stroke-width="1.9"/><circle cx="14.4" cy="5.6" r="3.6" fill="none" stroke="#5a5a5a" stroke-width="1.9"/><path d="M8.2 4.6 H11" stroke="#5a5a5a" stroke-width="1.4"/></svg>
<span class="t" style="left:831.6px;top:208.10px;font-size:15.6px;letter-spacing:0.210px;color:#8b0a14;">result</span>
<span class="t" style="left:877px;top:208.10px;font-size:15.6px;letter-spacing:0.000px;">=</span>
<span class="t" style="left:891.6px;top:208.10px;font-size:15.6px;letter-spacing:0.286px;color:#067d17;font-weight:bold;">&quot;t2&quot;</span>
<svg style="left:810px;top:237px" width="10" height="14" viewBox="0 0 10 14"><path d="M1.6 1.6 L7.6 7 L1.6 12.4" fill="none" stroke="#4d4d4d" stroke-width="1.7"/></svg>
<svg style="left:833px;top:233px" width="21" height="21" viewBox="0 0 21 21"><circle cx="10.6" cy="11" r="8.7" fill="#f6c37f"/><path d="M12.6 7.3 C10.6 6.6 9.9 7.6 9.9 9 V15.6 M7.8 10.2 H12.4" fill="none" stroke="#6b4a22" stroke-width="1.3"/><path d="M1.2 3.6 L4.2 1.2 L6.4 3.8 L3.4 6.2 Z" fill="#8b97a0"/><path d="M5 5 L7.6 7.4" stroke="#8b97a0" stroke-width="1"/></svg>
<span class="t" style="left:856.2px;top:234.40px;font-size:15.6px;letter-spacing:-0.056px;color:#8b0a14;">value</span>
<span class="t" style="left:899.4px;top:234.40px;font-size:15.6px;letter-spacing:0.000px;">=</span>
<span class="t" style="left:913px;top:234.40px;font-size:15.6px;letter-spacing:0.141px;color:#858585;">{char[2]@10655}</span>
<svg style="left:833px;top:258.4px" width="21" height="21" viewBox="0 0 21 21"><circle cx="10.6" cy="11" r="8.7" fill="#f6c37f"/><path d="M12.6 7.3 C10.6 6.6 9.9 7.6 9.9 9 V15.6 M7.8 10.2 H12.4" fill="none" stroke="#6b4a22" stroke-width="1.3"/></svg>
<span class="t" style="left:856.2px;top:259.70px;font-size:15.6px;letter-spacing:-0.407px;color:#8b0a14;">hash</span>
<span class="t" style="left:894.4px;top:259.70px;font-size:15.6px;letter-spacing:-0.042px;">= 0</span>
<svg style="left:781.2px;top:670.2px" width="21" height="21" viewBox="0 0 21 21"><circle cx="10.3" cy="10.3" r="10" fill="#0f6fd1"/><text x="10.4" y="15.2" text-anchor="middle" font-family="Liberation Sans,sans-serif" font-size="14" fill="#fff" letter-spacing="0">?</text></svg>
<div class="abs" style="left:1218.6px;top:665.2px;width:95.4px;height:27.6px;background:#e1e1e1;border:2px solid #1f7fdd"></div>
<span class="t" style="left:1236.4px;top:669.10px;font-size:15.4px;letter-spacing:-0.063px;">Evaluate</span>
<div class="abs" style="left:1323.6px;top:665.4px;width:90.6px;height:27.2px;background:#e1e1e1;border:1px solid #adadad"></div>
<span class="t" style="left:1349.2px;top:669.10px;font-size:15.4px;letter-spacing:0.048px;">Close</span>
</body>
</html>
